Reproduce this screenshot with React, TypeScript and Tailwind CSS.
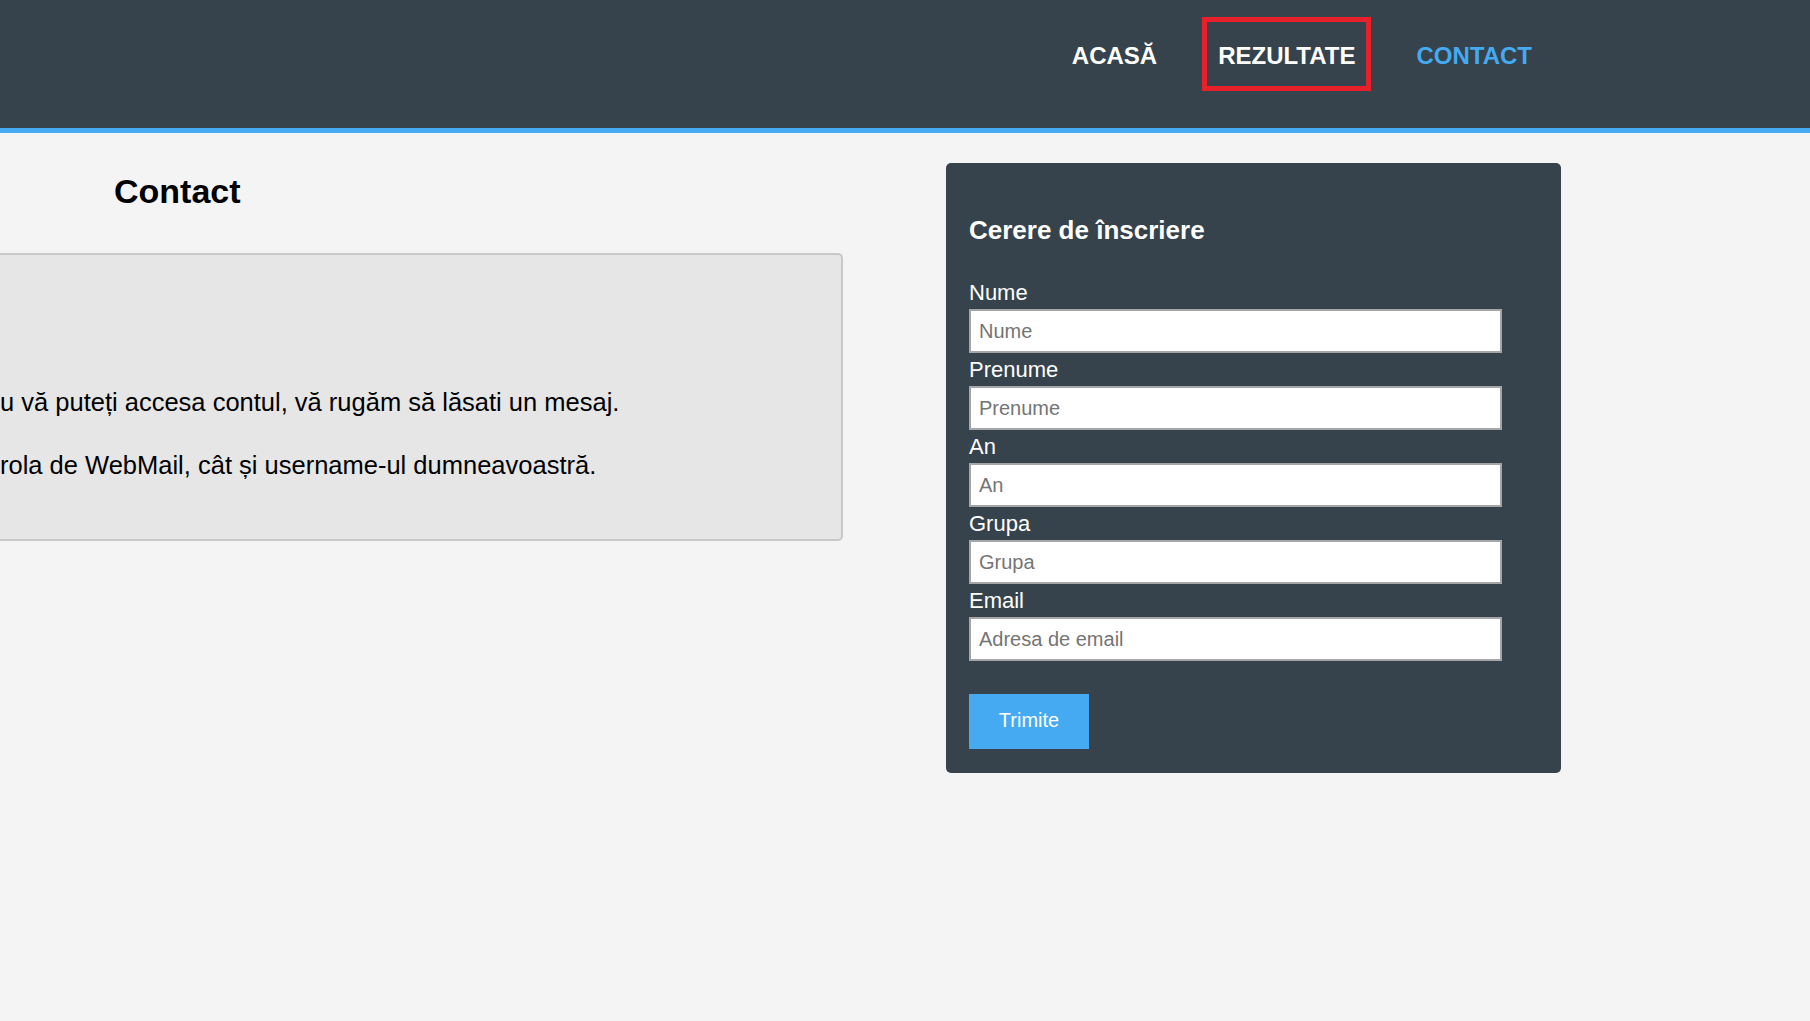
import React from "react";

const font = { fontFamily: '"Liberation Sans", Arial, sans-serif' };

function Field({ label, placeholder }: { label: string; placeholder: string }) {
  return (
    <div className="flex flex-col">
      <label className="text-[22px] leading-[33px] text-white">{label}</label>
      <input
        type="text"
        placeholder={placeholder}
        className="w-[533px] h-[44px] border-2 border-[#a6a6a6] bg-white pl-[8px] text-[20px] text-black placeholder:text-[#757575] outline-none"
      />
    </div>
  );
}

export default function App() {
  return (
    <div className="min-h-screen bg-[#f4f4f4] overflow-hidden" style={font}>
      <header className="h-[133px] bg-[#36434c] border-b-[5px] border-[#45aaf2] flex justify-end items-start pt-[17px] pr-[262px]">
        <nav className="flex gap-[29px]">
          <a className="border-[5px] border-transparent px-[11px] pt-[20px] pb-[16px] text-[24px] font-bold text-white leading-[normal]">
            ACASĂ
          </a>
          <a className="border-[5px] border-[#e8202a] px-[11px] pt-[20px] pb-[16px] text-[24px] font-bold text-white leading-[normal]">
            REZULTATE
          </a>
          <a className="border-[5px] border-transparent px-[11px] pt-[20px] pb-[16px] text-[24px] font-bold text-[#45aaf2] leading-[normal]">
            CONTACT
          </a>
        </nav>
      </header>

      <main className="flex">
        <section className="w-[843px] shrink-0 pt-[39px]">
          <h1 className="ml-[114px] text-[34px] font-bold text-black leading-[38px]">Contact</h1>
          <div className="mt-[43px] h-[288px] bg-[#e6e6e6] border-2 border-l-0 border-[#c8c8c8] rounded-r-[5px] pt-[133px] flex flex-col gap-[35px] text-[25.5px] text-black leading-[28px]">
            <p>u vă puteți accesa contul, vă rugăm să lăsati un mesaj.</p>
            <p>rola de WebMail, cât și username-ul dumneavoastră.</p>
          </div>
        </section>

        <aside className="ml-[103px] mt-[30px] w-[615px] shrink-0 bg-[#36434c] rounded-[5px] px-[23px] pt-[52px] pb-[24px]">
          <h2 className="text-[26px] font-bold text-white leading-[30px] mb-[31px]">Cerere de înscriere</h2>
          <form className="flex flex-col" onSubmit={(e) => e.preventDefault()}>
            <Field label="Nume" placeholder="Nume" />
            <Field label="Prenume" placeholder="Prenume" />
            <Field label="An" placeholder="An" />
            <Field label="Grupa" placeholder="Grupa" />
            <Field label="Email" placeholder="Adresa de email" />
            <button
              type="submit"
              className="mt-[33px] w-[120px] h-[55px] bg-[#45aaf2] text-white text-[20px] leading-[23px] pb-[3px]"
            >
              Trimite
            </button>
          </form>
        </aside>
      </main>
    </div>
  );
}
